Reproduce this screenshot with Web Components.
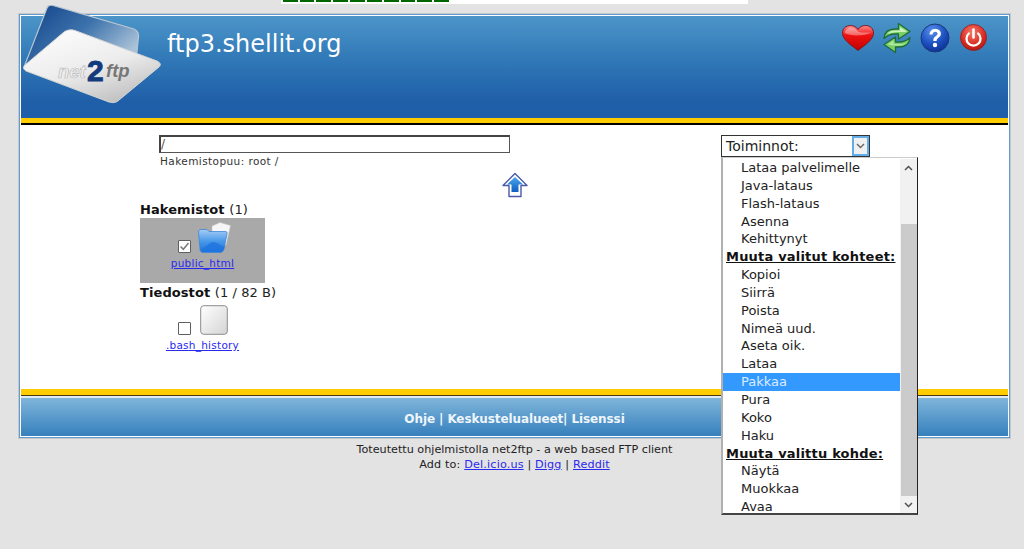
<!DOCTYPE html>
<html lang="fi">
<head>
<meta charset="utf-8">
<title>net2ftp</title>
<style>
html, body { margin: 0; padding: 0; height: 549px; overflow: hidden; }
body { background: #e3e3e3; font-family: "DejaVu Sans", sans-serif; color: #222; }
</style>
</head>
<body>
<n2-meter></n2-meter>
<n2-frame>
    <n2-header slot="header" host-name="ftp3.shellit.org"></n2-header>
    <n2-browser></n2-browser>
    <n2-menu slot="menu"></n2-menu>
    <n2-bottom slot="bottom"></n2-bottom>
</n2-frame>
<n2-credits></n2-credits>

<script>
// barra de progreso de arriba
class Meter extends HTMLElement {
    constructor() {
        super();
        this.attachShadow({ mode: 'open' });
        let cells = '';
        for (let i = 0; i < 10; i++) cells += '<i></i>';
        this.shadowRoot.innerHTML = `
        <style>
        :host { display: block; width: 467px; height: 4px; margin-left: 281px; background: #fff; }
        div { display: flex; gap: 2px; padding-left: 1.700px; }
        i { display: block; width: 14.850px; height: 2px; background: #006600; }
        </style>
        <div>${cells}</div>
        `;
    }
}

class Frame extends HTMLElement {
    constructor() {
        super();
        this.attachShadow({ mode: 'open' });
        this.shadowRoot.innerHTML = `
        <style>
        :host {
            display: block;
            position: relative;
            box-sizing: border-box;
            width: 991px;
            height: 424px;
            margin: 10px 0 0 19px;
            border: 1px solid #5f9ad0;
            outline: 1px solid #c8c8c8;
            background: #fff;
        }
        #inner {
            box-sizing: border-box;
            height: 100%;
            border: 1px solid #fff;
            display: flex;
            flex-direction: column;
        }
        main { flex: 1; min-height: 0; }
        </style>
        <div id="inner">
            <slot name="header"></slot>
            <main><slot></slot></main>
            <slot name="bottom"></slot>
        </div>
        <slot name="menu"></slot>
        `;
    }
}

class Header extends HTMLElement {
    constructor() {
        super();
        this.attachShadow({ mode: 'open' });
        this.shadowRoot.innerHTML = `
        <style>
        :host { display: block; }
        #band {
            height: 102px;
            display: flex;
            justify-content: space-between;
            background: linear-gradient(#4c95c9 0, #2f77b6 45%, #1f5ea8 85%, #1f5ea8 100%);
        }
        h1 {
            margin: 14px 0 0 146px;
            font: normal 24px "DejaVu Sans", sans-serif;
            line-height: 28px;
            color: #fff;
        }
        #tools { display: flex; margin: 6px 21px 0 0; height: 32px; align-items: center; }
        #tools svg { display: block; }
        #logo { position: absolute; left: 2px; top: -10px; }
        #rule { height: 5px; background: #ffcc00; }
        #black { height: 2px; background: #000; }
        </style>
        <div id="band">
            <h1>${this.getAttribute('host-name')}</h1>
            <div id="tools">
                <svg width="34" height="28" viewBox="0 0 34 28">
                    <defs><linearGradient id="hg" x1="0" y1="0" x2="0" y2="1"><stop offset="0" stop-color="#ff8a8a"/><stop offset=".4" stop-color="#ee1111"/><stop offset="1" stop-color="#c00000"/></linearGradient></defs>
                    <path d="M17 26.500C10 21 2 16 1.500 9.500 1.200 4.500 5 1.500 9.500 1.500c3.200 0 6 1.500 7.500 4 1.500-2.500 4.300-4 7.500-4 4.500 0 8.300 3 8 8C32 16 24 21 17 26.500z" fill="url(#hg)" stroke="#7c1a24" stroke-width="1"/>
                    <path d="M4 9c0-3 3-5.500 6-5.500 3 0 5 1.500 7 4 3 1.500 9 1 12.500 1-5 3.500-20 4-25.500.5z" fill="#fff" opacity=".35"/>
                </svg>
                <svg width="30" height="32" viewBox="0 0 30 32" style="margin-left:7px">
                    <path d="M2 16.500C2.500 10 7 7 13 7h3.500V1.500L28 9.500 16.500 17V12H13C8.500 12 5.500 13 2 16.500z" fill="#79d068" stroke="#1f6b3a" stroke-width="1.300" stroke-linejoin="round"/>
                    <path d="M5 12C7 9.500 10 8.500 13.500 8.500h4.500V5l7 4.500-2 .6C17 9.800 10 10 5 12z" fill="#d9f7cc" opacity=".85"/>
                    <path d="M28 15.500C27.500 22 23 25 17 25h-3.500v5.500L2 22.500 13.500 15v5H17C21.500 20 24.500 19 28 15.500z" fill="#79d068" stroke="#1f6b3a" stroke-width="1.300" stroke-linejoin="round"/>
                    <path d="M25.500 19.500C23.500 21.500 21 22 17.500 22H11.500V18.500L5.500 22.500 12 23.500C17 24 22.500 23.500 25.500 19.500z" fill="#d9f7cc" opacity=".6"/>
                </svg>
                <svg width="30" height="30" viewBox="0 0 30 30" style="margin-left:8px">
                    <defs><radialGradient id="bg" cx=".4" cy=".25" r=".85"><stop offset="0" stop-color="#5a90ee"/><stop offset=".55" stop-color="#1c50c0"/><stop offset="1" stop-color="#0a2a88"/></radialGradient></defs>
                    <circle cx="15" cy="15" r="14" fill="url(#bg)" stroke="#1a3a7a"/>
                    <path d="M9.500 11.500C9.800 8 12 6 15.300 6c3.300 0 5.600 2 5.600 4.800 0 3.800-4.300 3.800-4.300 7.200h-3.300c0-5 4.200-4.800 4.200-7.200 0-1.200-1-2-2.300-2-1.500 0-2.500 1-2.600 2.700z" fill="#fff"/>
                    <circle cx="15" cy="22" r="2.200" fill="#fff"/>
                </svg>
                <svg width="27" height="27" viewBox="0 0 27 27" style="margin-left:10px;margin-top:-2px">
                    <defs><radialGradient id="rg" cx=".45" cy=".3" r=".8"><stop offset="0" stop-color="#f47a6a"/><stop offset=".6" stop-color="#d82a20"/><stop offset="1" stop-color="#a01410"/></radialGradient></defs>
                    <circle cx="13.500" cy="13.500" r="13" fill="url(#rg)" stroke="#9a1a18" stroke-width=".8"/>
                    <path d="M8.800 9.500A7 7 0 1 0 18.200 9.500" fill="none" stroke="#fff" stroke-width="2.300" stroke-linecap="round"/>
                    <path d="M13.500 5.500V13.500" fill="none" stroke="#fff" stroke-width="2.600" stroke-linecap="round"/>
                </svg>
            </div>
        </div>
        <div id="rule"></div>
        <div id="black"></div>
        <svg id="logo" width="146" height="104" viewBox="0 0 146 104">
            <defs>
                <linearGradient id="back" x1="0" y1="0" x2="1" y2=".6"><stop offset="0" stop-color="#0f3f86"/><stop offset=".55" stop-color="#3d73ac"/><stop offset="1" stop-color="#a9c2d8"/></linearGradient>
                <linearGradient id="card" x1="0" y1="0" x2=".6" y2="1"><stop offset="0" stop-color="#ffffff"/><stop offset=".6" stop-color="#ececec"/><stop offset="1" stop-color="#c4c4c4"/></linearGradient>
            </defs>
            <path d="M25 3C26 0 28-.5 31 .5L112 24C116 26 117 28 116.500 32L114 56 4 64 2 62z" fill="url(#back)" stroke="#b9c6d2" stroke-width="1.200"/>
            <path d="M42 27C45 25 49 24 53 25.500L135 56C139 58 139 60 137 62L97 95C94 98 91 98 87 97L4 66C1 64 1 62 3 60z" fill="url(#card)" stroke="#d4d4d4"/>
            <text x="36" y="73" font-family="'Liberation Sans',sans-serif" font-size="18.500" font-weight="700" font-style="italic" fill="#eee" stroke="#bdbdbd" stroke-width=".7">net</text>
            <text x="65" y="76" font-family="'Liberation Sans',sans-serif" font-size="30" font-weight="700" fill="#123a7c" stroke="#123a7c" stroke-width=".9">2</text>
            <text x="84" y="72" font-family="'Liberation Sans',sans-serif" font-size="18.500" font-weight="700" font-style="italic" fill="#777">ftp</text>
        </svg>
        `;
    }
}

class Entry extends HTMLElement {
    constructor() {
        super();
        this.attachShadow({ mode: 'open' });
        const checked = this.hasAttribute('checked');
        this.shadowRoot.innerHTML = `
        <style>
        :host { display: flex; flex-direction: column; align-items: center; width: 125px; box-sizing: border-box; }
        #top { display: flex; align-items: flex-end; gap: 7px; }
        #box {
            box-sizing: border-box; width: 13px; height: 13px;
            border: 1px solid #5f5f5f; border-radius: 1px; background: #fff;
            display: flex; align-items: center; justify-content: center;
        }
        a { color: #2a2aee; font-size: 10.500px; line-height: 12px; margin-top: 4px; letter-spacing: .25px; }
        </style>
        <div id="top">
            <span id="box">${checked ? '<svg width="11" height="11" viewBox="0 0 11 11"><path d="M1.500 5.500 4.300 8.300 9.500 2" fill="none" stroke="#7a7a7a" stroke-width="1.500"/></svg>' : ''}</span>
            <slot></slot>
        </div>
        <a href="#">${this.getAttribute('label')}</a>
        `;
    }
}

class Browser extends HTMLElement {
    constructor() {
        super();
        this.attachShadow({ mode: 'open' });
        this.shadowRoot.innerHTML = `
        <style>
        :host { display: block; padding: 10px 0 0 119px; }
        #path { margin-left: 19px; width: 351px; }
        #input {
            box-sizing: border-box; height: 18px; width: 351px;
            border: 1px solid #555; border-top: 2px solid #444; border-left: 2px solid #444;
            font-size: 12px; line-height: 15px; color: #555; background: #fff;
        }
        #crumb { font-size: 10.500px; line-height: 12px; margin: 2px 0 0 1px; color: #333; letter-spacing: .42px; }
        #up { display: flex; justify-content: flex-end; width: 351px; margin: 5px 0 0 0; height: 30px; align-items: flex-start; }
        #up svg { margin-right: -18px; }
        h3 { margin: 0; font-size: 13px; line-height: 15px; font-weight: 700; color: #111; letter-spacing: .08px; }
        h3 span { font-weight: 400; color: #222; }
        #dirs { background: #a9a9a9; width: 125px; height: 65px; box-sizing: border-box; padding-top: 4px; margin-top: 1px; }
        #files { height: 48px; padding-top: 5px; width: 125px; }
        #second { margin-top: 2px; }
        </style>
        <div id="path">
            <div id="input">/</div>
            <div id="crumb">Hakemistopuu: root /</div>
            <div id="up">
                <svg width="26" height="26" viewBox="0 0 26 26">
                    <defs><linearGradient id="ua" x1="0" y1="0" x2="0" y2="1"><stop offset="0" stop-color="#4aa6ee"/><stop offset="1" stop-color="#0f5fc0"/></linearGradient></defs>
                    <path d="M13 1.500 25 13.500 19 13.500 19 24.500 7 24.500 7 13.500 1 13.500z" fill="#fff" stroke="#4c5aa8" stroke-width="1.400" stroke-linejoin="round"/>
                    <path d="M13 5 21 12.500 16.500 12.500 16.500 20 9.500 20 9.500 12.500 5 12.500z" fill="url(#ua)"/>
                </svg>
            </div>
        </div>
        <h3>Hakemistot <span>(1)</span></h3>
        <div id="dirs">
            <n2-entry checked label="public_html">
                <svg width="33" height="31" viewBox="0 0 33 31" style="margin-right:-4px">
                    <defs><linearGradient id="fo" x1="0" y1="0" x2="0" y2="1"><stop offset="0" stop-color="#a8cdf5"/><stop offset=".5" stop-color="#4a9aea"/><stop offset="1" stop-color="#1f6fd8"/></linearGradient></defs>
                    <path d="M14 4 22 .5 32.500 3.500 28 23 14 14z" fill="#f6f6f6" stroke="#c8c8c8" stroke-width=".6"/>
                    <path d="M.5 10C.5 8.500 1.500 7.500 3 7.500H9L11 9.500H27C28.500 9.500 29.500 10 29 12L26 27C25.500 29 24 30.500 22 30.500H5C3 30.500 2 29 2 27z" fill="url(#fo)" stroke="#3c86d8" stroke-width=".8"/>
                    <path d="M3 27C8 26 11 20 15 20 20 20 23 24 26.500 25L26 27 23 30H5z" fill="#1f74e0" opacity=".8"/>
                </svg>
            </n2-entry>
        </div>
        <h3 id="second">Tiedostot <span>(1 / 82 B)</span></h3>
        <div id="files">
            <n2-entry label=".bash_history">
                <svg width="28" height="30" viewBox="0 0 28 30" style="margin-left:2px;margin-right:-1px">
                    <defs><linearGradient id="fi" x1="0" y1="0" x2="1" y2="1"><stop offset="0" stop-color="#ffffff"/><stop offset="1" stop-color="#d4d4d4"/></linearGradient></defs>
                    <rect x=".7" y=".7" width="26.600" height="28.600" rx="3" fill="url(#fi)" stroke="#8c8c8c" stroke-width="1"/>
                </svg>
            </n2-entry>
        </div>
        `;
    }
}

// lista abierta del select de acciones
class Menu extends HTMLElement {
    constructor() {
        super();
        this.attachShadow({ mode: 'open' });
        const rows = [
            'Lataa palvelimelle', 'Java-lataus', 'Flash-lataus', 'Asenna', 'Kehittynyt',
            '#Muuta valitut kohteet:',
            'Kopioi', 'Siirrä', 'Poista', 'Nimeä uud.', 'Aseta oik.', 'Lataa', '*Pakkaa', 'Pura', 'Koko', 'Haku',
            '#Muuta valittu kohde:',
            'Näytä', 'Muokkaa', 'Avaa'
        ];
        const html = rows.map(r => {
            if (r[0] === '#') return `<div class="group">${r.slice(1)}</div>`;
            if (r[0] === '*') return `<div class="opt on">${r.slice(1)}</div>`;
            return `<div class="opt">${r}</div>`;
        }).join('');
        this.shadowRoot.innerHTML = `
        <style>
        :host { position: absolute; left: 701px; top: 120px; width: 197px; font-size: 13px; z-index: 5; display: block; }
        #select {
            box-sizing: border-box; width: 149px; height: 22px;
            border: 1px solid #333; background: #fff;
            display: flex; justify-content: space-between; align-items: stretch;
            font-size: 14px; line-height: 20px; padding-left: 4px; color: #222;
        }
        #btn {
            width: 17px; background: #f0f0f0; border: 2px solid #62ade8; box-sizing: border-box;
            display: flex; align-items: center; justify-content: center;
        }
        #list {
            box-sizing: border-box; width: 197px; height: 358px;
            background: #fff; border: 1px solid #333; border-left: 2px solid #b0b0b0; border-top-color: #ccc;
            border-right: 1px solid #222; border-bottom: 2px solid #444;
            display: flex; overflow: hidden; padding-top: 1px;
        }
        #rows { flex: 1; min-width: 0; }
        .opt { height: 17.850px; line-height: 17.850px; padding-left: 18px; color: #222; box-sizing: border-box; }
        .opt.on { background: #3399ff; color: #dcecff; }
        .group { height: 17.850px; line-height: 17.850px; padding-left: 3px; font-weight: 700; color: #111; text-decoration: underline; letter-spacing: .2px; }
        #bar { width: 17px; background: #f1f1f1; display: flex; flex-direction: column; }
        #bar b { display: flex; height: 17px; align-items: center; justify-content: center; }
        #track { flex: 1; display: flex; flex-direction: column; }
        #thumb { margin: 48px 0 0 1px; flex: 1; background: #cbcbcb; }
        </style>
        <div id="select">
            <span>Toiminnot:</span>
            <span id="btn"><svg width="9" height="6" viewBox="0 0 9 6"><path d="M1 1 4.500 4.500 8 1" fill="none" stroke="#666" stroke-width="1.400"/></svg></span>
        </div>
        <div id="list">
            <div id="rows">${html}</div>
            <div id="bar">
                <b><svg width="9" height="6" viewBox="0 0 9 6"><path d="M1 5 4.500 1.500 8 5" fill="none" stroke="#505050" stroke-width="1.500"/></svg></b>
                <div id="track"><div id="thumb"></div></div>
                <b><svg width="9" height="6" viewBox="0 0 9 6"><path d="M1 1 4.500 4.500 8 1" fill="none" stroke="#505050" stroke-width="1.500"/></svg></b>
            </div>
        </div>
        `;
    }
}

class Bottom extends HTMLElement {
    constructor() {
        super();
        this.attachShadow({ mode: 'open' });
        this.shadowRoot.innerHTML = `
        <style>
        :host { display: block; }
        #rule { height: 6px; background: #ffcc00; }
        #dark { height: 1px; background: #4a3a10; }
        #gap { height: 2px; background: #dfeaf3; }
        #band {
            height: 38px; box-sizing: border-box;
            background: linear-gradient(#7fb5da, #3680bd);
            color: #eef5fb; font-size: 12px; font-weight: 700;
            text-align: center; line-height: 42px; letter-spacing: -.1px;
        }
        </style>
        <div id="rule"></div>
        <div id="dark"></div>
        <div id="gap"></div>
        <div id="band">Ohje | Keskustelualueet| Lisenssi</div>
        `;
    }
}

class Credits extends HTMLElement {
    constructor() {
        super();
        this.attachShadow({ mode: 'open' });
        this.shadowRoot.innerHTML = `
        <style>
        :host { display: block; text-align: center; font-size: 11.200px; line-height: 15px; color: #222; margin: 4px 0 0 5px; }
        a { color: #2a2aee; }
        #add { letter-spacing: .16px; }
        </style>
        <div>Toteutettu ohjelmistolla net2ftp - a web based FTP client</div>
        <div id="add">Add to: <a href="#">Del.icio.us</a> | <a href="#">Digg</a> | <a href="#">Reddit</a></div>
        `;
    }
}

customElements.define('n2-meter', Meter);
customElements.define('n2-frame', Frame);
customElements.define('n2-header', Header);
customElements.define('n2-entry', Entry);
customElements.define('n2-browser', Browser);
customElements.define('n2-menu', Menu);
customElements.define('n2-bottom', Bottom);
customElements.define('n2-credits', Credits);
</script>
</body>
</html>
